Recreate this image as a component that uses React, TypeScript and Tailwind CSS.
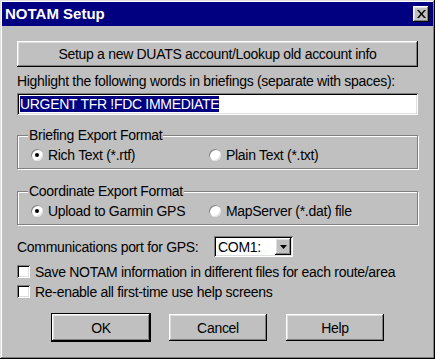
import React from "react";

const raised =
  "bg-[#c0c0c0] shadow-[inset_-1px_-1px_0_#000,inset_1px_1px_0_#fff,inset_-2px_-2px_0_#808080,inset_2px_2px_0_#dfdfdf]";
const sunken =
  "bg-white shadow-[inset_1px_1px_0_#808080,inset_-1px_-1px_0_#fff,inset_2px_2px_0_#000,inset_-2px_-2px_0_#dfdfdf]";

function Radio({ checked, label }: { checked?: boolean; label: string }) {
  return (
    <div className="flex items-center gap-[5px]">
      <span className="relative w-[12px] h-[12px] rounded-full bg-white shadow-[inset_1px_1px_0_#808080,inset_-1px_-1px_0_#dfdfdf] flex items-center justify-center">
        {checked && <span className="w-[4px] h-[4px] rounded-full bg-black" />}
      </span>
      <span>{label}</span>
    </div>
  );
}

function Group({ title, left, right }: { title: string; left: string; right: string }) {
  return (
    <div className="relative h-[34px] border border-[#808080] shadow-[1px_1px_0_#fff,inset_1px_1px_0_#fff]">
      <span className="absolute left-[10px] top-[-9px] px-[1px] bg-[#c0c0c0] leading-[16px]">{title}</span>
      <div className="flex items-center h-full pt-[5px] pl-[13px]">
        <div className="w-[178px]">
          <Radio checked label={left} />
        </div>
        <Radio label={right} />
      </div>
    </div>
  );
}

function Check({ label }: { label: string }) {
  return (
    <div className="flex items-center gap-[5px] h-[13px]">
      <span className={`w-[13px] h-[13px] ${sunken}`} />
      <span>{label}</span>
    </div>
  );
}

function Btn({ label, def }: { label: string; def?: boolean }) {
  return (
    <div className={`w-[98px] h-[27px] ${def ? "outline outline-1 outline-black" : ""} ${raised} flex items-center justify-center`}>
      {label}
    </div>
  );
}

export default function App() {
  return (
    <div
      className="w-[435px] h-[359px] bg-[#c0c0c0] p-[2px] flex flex-col text-black text-[14px] leading-[14px] tracking-[-0.3px] shadow-[inset_-1px_-1px_0_#000,inset_1px_1px_0_#dfdfdf,inset_-2px_-2px_0_#808080,inset_2px_2px_0_#fff]"
      style={{ fontFamily: '"Liberation Sans", Arial, sans-serif' }}
    >
      {/* title bar */}
      <div className="h-[24px] bg-[#000080] flex items-center justify-between pl-[3px] pr-[4px]">
        <span className="text-white font-bold text-[15px] tracking-normal">NOTAM Setup</span>
        <span className={`w-[16px] h-[16px] ${raised} flex items-center justify-center`}>
          <svg width="9" height="8" viewBox="0 0 9 8">
            <path d="M0 0h2l2.5 3L7 0h2L5.5 4L9 8H7L4.5 5L2 8H0l3.5-4z" fill="#000" />
          </svg>
        </span>
      </div>

      {/* body */}
      <div className="flex flex-col px-[15px] pt-[15px]">
        <div className={`h-[26px] ${raised} flex items-center justify-center`}>
          Setup a new DUATS account/Lookup old account info
        </div>

        <div className="mt-[7px] h-[14px]">Highlight the following words in briefings (separate with spaces):</div>

        <div className={`mt-[5px] h-[22px] ${sunken} flex items-center px-[3px]`}>
          <span className="bg-[#000080] text-white leading-[16px]">URGENT TFR !FDC IMMEDIATE</span>
        </div>

        <div className="mt-[20px]">
          <Group title="Briefing Export Format" left="Rich Text (*.rtf)" right="Plain Text (*.txt)" />
        </div>
        <div className="mt-[22px]">
          <Group title="Coordinate Export Format" left="Upload to Garmin GPS" right="MapServer (*.dat) file" />
        </div>

        <div className="mt-[11px] h-[21px] flex items-center">
          <span className="w-[197px] shrink-0">Communications port for GPS:</span>
          <div className={`w-[79px] h-[21px] ${sunken} flex items-center pl-[4px] pr-[2px]`}>
            <span className="flex-1">COM1:</span>
            <span className={`w-[16px] h-[17px] ${raised} flex items-center justify-center`}>
              <svg width="7" height="4" viewBox="0 0 7 4">
                <path d="M0 0h7L3.5 4z" fill="#000" />
              </svg>
            </span>
          </div>
        </div>

        <div className="mt-[8px]">
          <Check label="Save NOTAM information in different files for each route/area" />
        </div>
        <div className="mt-[7px]">
          <Check label="Re-enable all first-time use help screens" />
        </div>

        <div className="mt-[16px] flex gap-[19px] pl-[35px]">
          <Btn label="OK" def />
          <Btn label="Cancel" />
          <Btn label="Help" />
        </div>
      </div>
    </div>
  );
}
